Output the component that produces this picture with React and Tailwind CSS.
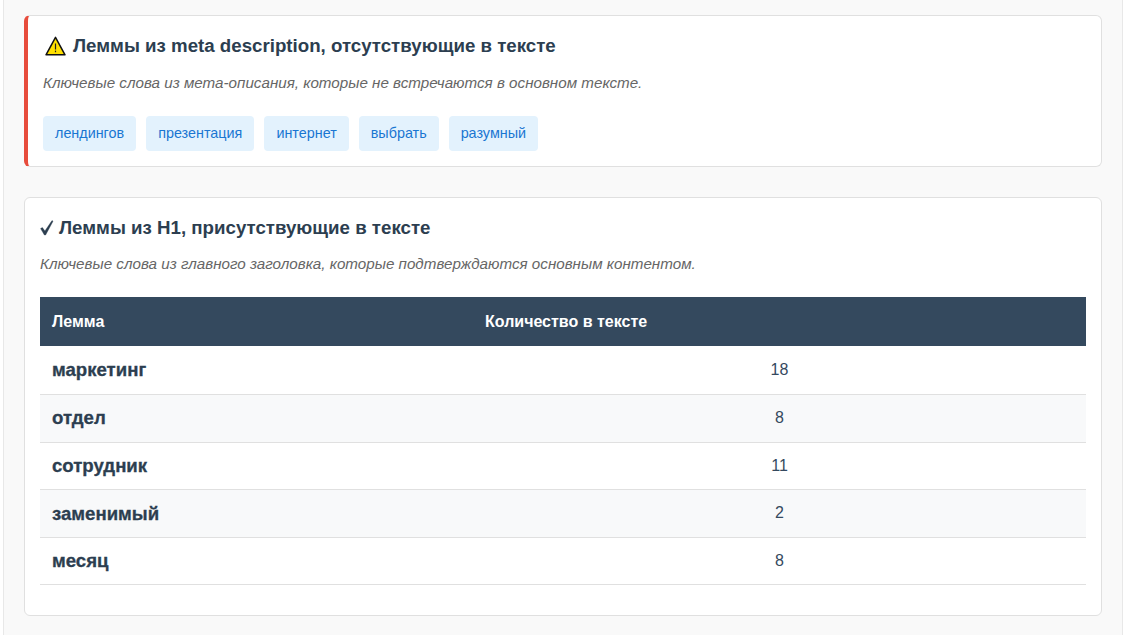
const metaLemmas = ['лендингов', 'презентация', 'интернет', 'выбрать', 'разумный'];

const h1Lemmas = [
  { lemma: 'маркетинг', count: 18 },
  { lemma: 'отдел', count: 8 },
  { lemma: 'сотрудник', count: 11 },
  { lemma: 'заменимый', count: 2 },
  { lemma: 'месяц', count: 8 },
];

const WarningIcon = () => (
  <svg width="21" height="20" viewBox="0 0 21 20" className="shrink-0">
    <path d="M10.5 1.4 L20 18.8 H1 Z" fill="#ffe000" stroke="#111" strokeWidth="1.5" strokeLinejoin="round" />
    <rect x="9.9" y="7.5" width="1.2" height="6" fill="#222" />
    <rect x="9.9" y="14.6" width="1.2" height="1.6" fill="#222" />
  </svg>
);

const CheckIcon = () => (
  <svg width="14" height="16" viewBox="0 0 14 16" className="shrink-0">
    <path d="M0.6 8.6 L2.4 7.6 L4.9 11 L12 0.6 L13 1.2 L5.6 15 H4.4 Z" fill="#2c3e50" stroke="#2c3e50" strokeWidth="0.4" />
  </svg>
);

export default function App() {
  return (
    <div className="h-[635px] overflow-hidden bg-white font-['Liberation_Sans',Arial,sans-serif] text-[#2c3e50]">
      <div className="ml-[3px] h-full border-x border-[#e8e8e8] bg-[#f9f9f9] px-5 pt-[15px]">
        <div className="h-[152px] rounded-md border border-l-4 border-[#e0e0e0] border-l-[#e74c3c] bg-white pl-[15px] pr-4 pt-[18px]">
          <h3 className="flex h-6 items-center gap-[7px] pl-[2px] text-[18.7px] font-bold leading-6">
            <WarningIcon />
            Леммы из meta description, отсутствующие в тексте
          </h3>
          <p className="mt-4 text-[15.2px] italic leading-[18px] text-[#666]">
            Ключевые слова из мета-описания, которые не встречаются в основном тексте.
          </p>
          <div className="mt-6 flex gap-[10px]">
            {metaLemmas.map((word) => (
              <span key={word} className="flex h-[35px] items-center rounded bg-[#e3f2fd] px-3 text-[14.36px] text-[#1976d2]">
                {word}
              </span>
            ))}
          </div>
        </div>

        <div className="mt-[30px] h-[419px] rounded-md border border-[#e0e0e0] bg-white px-[15px] pt-[18px]">
          <h3 className="flex h-6 items-center gap-[5px] text-[18.7px] font-bold leading-6">
            <CheckIcon />
            Леммы из H1, присутствующие в тексте
          </h3>
          <p className="mt-[15px] text-[15.2px] italic leading-[18px] text-[#666]">
            Ключевые слова из главного заголовка, которые подтверждаются основным контентом.
          </p>
          <table className="mt-6 w-full table-fixed border-collapse text-base">
            <thead>
              <tr className="h-[49px] bg-[#34495e] text-left text-white">
                <th className="w-[433px] px-3 font-bold">Лемма</th>
                <th className="px-3 font-bold">Количество в тексте</th>
              </tr>
            </thead>
            <tbody>
              {h1Lemmas.map((row, i) => (
                <tr key={row.lemma} className={`h-[47.6px] first:h-[48.5px] border-b border-[#e0e0e0] ${i % 2 === 1 ? 'bg-[#f8f9fa]' : 'bg-white'}`}>
                  <td className="px-3 text-[18.6px] font-bold [-webkit-text-stroke:0.3px]">{row.lemma}</td>
                  <td className="px-3 text-center text-[#34495e]">{row.count}</td>
                </tr>
              ))}
            </tbody>
          </table>
        </div>
      </div>
    </div>
  );
}
